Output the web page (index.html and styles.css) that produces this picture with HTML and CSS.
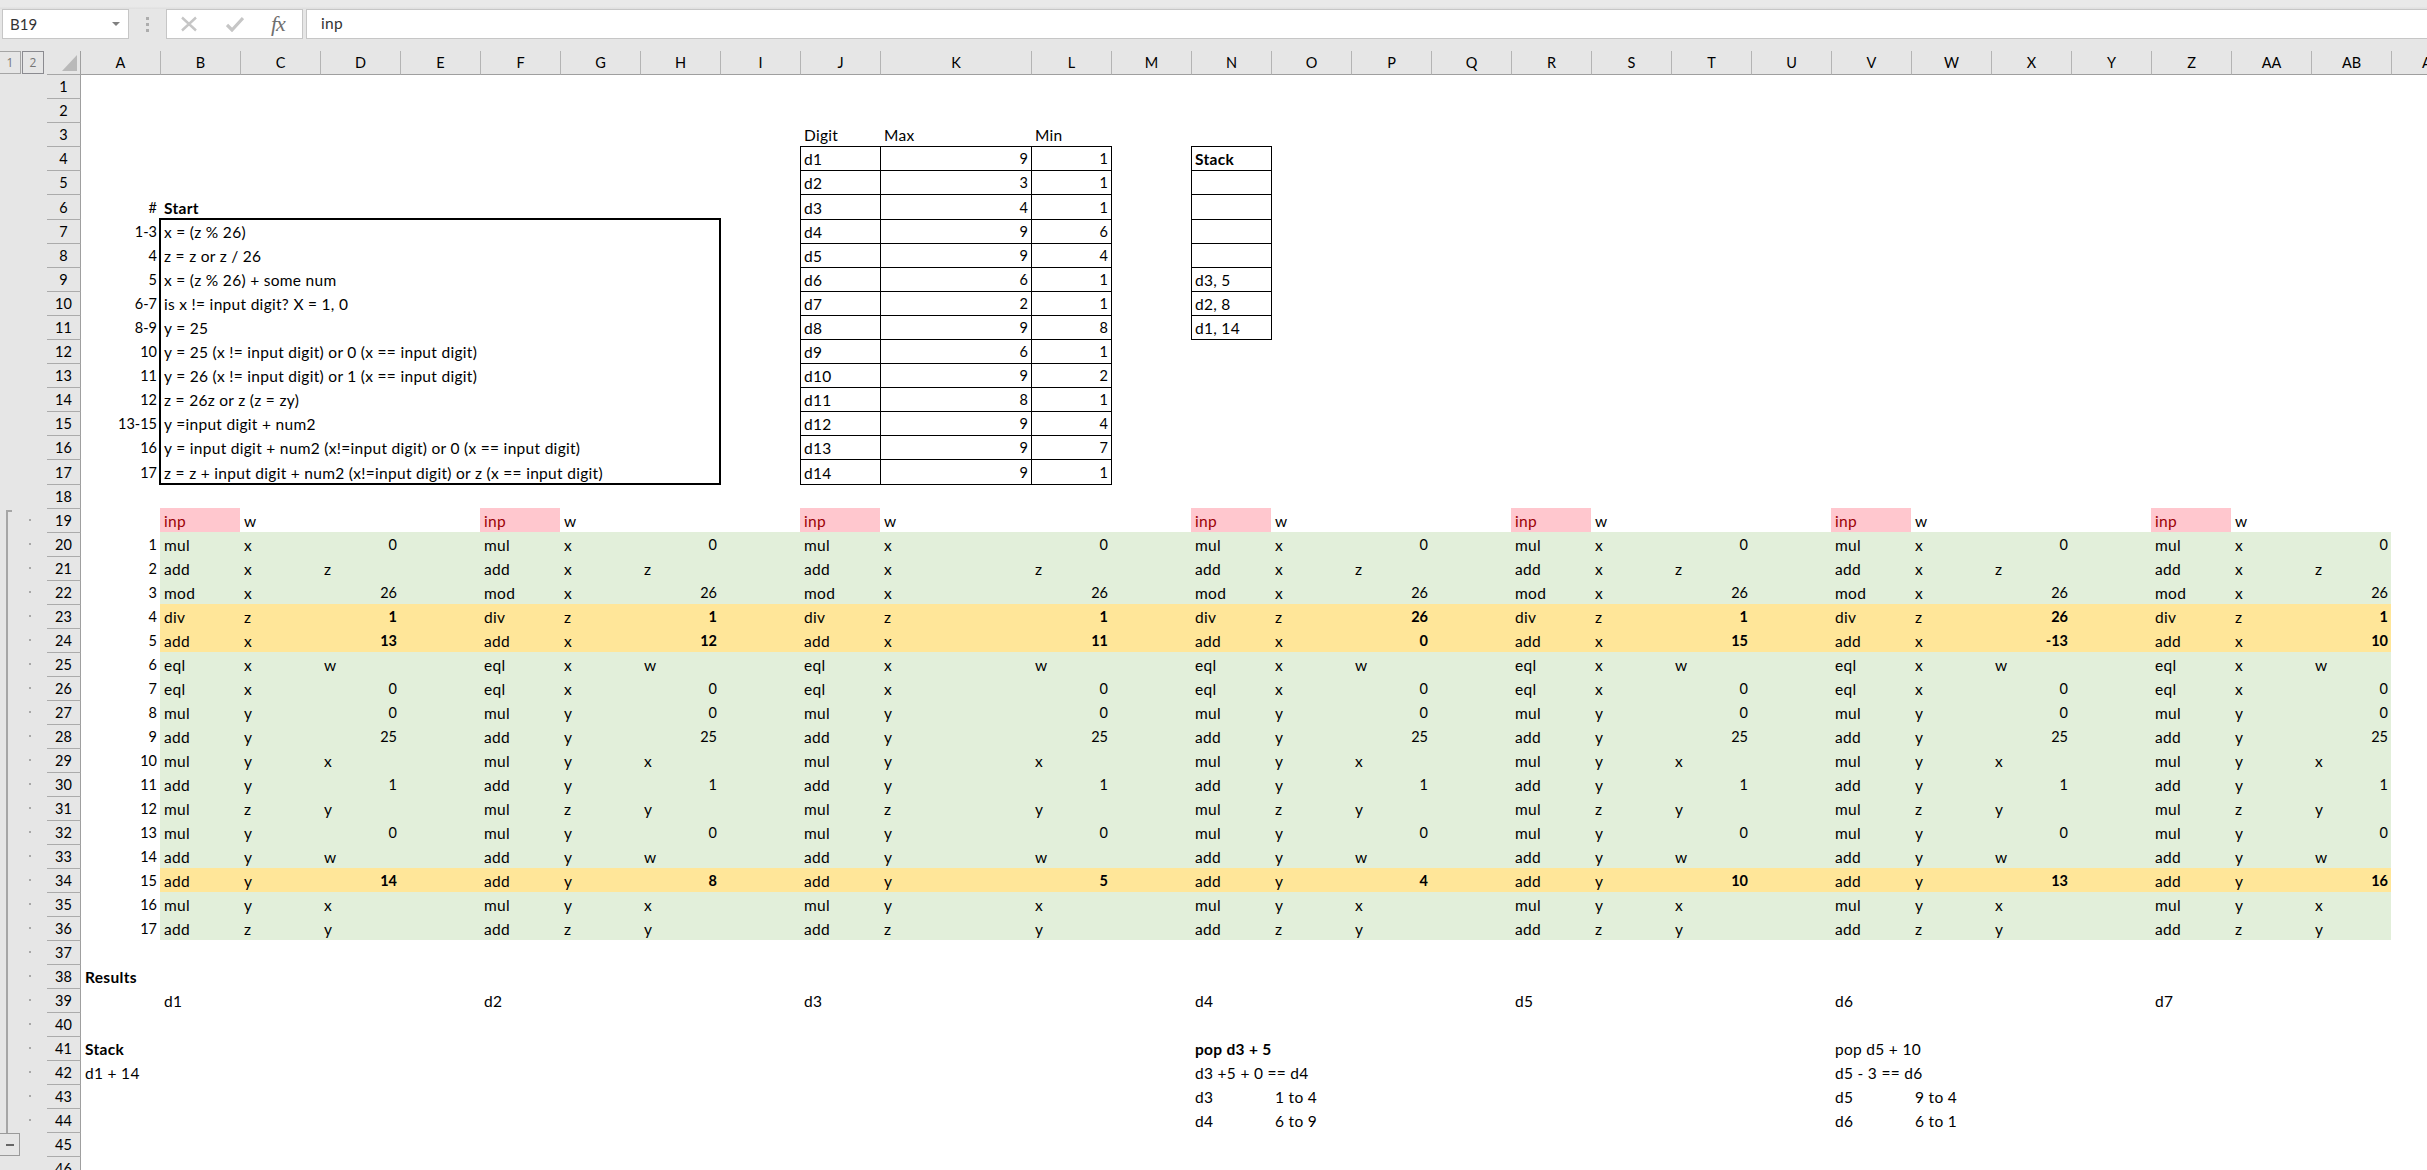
FILE: index.html
```html
<!DOCTYPE html>
<html lang="en">
<head>
<meta charset="utf-8">
<title>Worksheet</title>
<link rel="stylesheet" href="styles.css">
</head>
<body>
<div class="app">
  <div class="top-edge"></div>
  <div class="formula-bar">
    <div class="name-box"><span>B19</span><svg class="caret" width="8" height="4" viewBox="0 0 8 4"><path d="M0 0h8L4 4z" fill="#808080"/></svg></div>
    <div class="grip"><i></i><i></i><i></i></div>
    <div class="fx-box">
      <svg class="fx-icon" width="18" height="16" viewBox="0 0 18 16"><path d="M2 1.5 16 14.5M16 1.5 2 14.5" stroke="#c6c6c6" stroke-width="2.4" fill="none"/></svg>
      <svg class="fx-icon" width="18" height="16" viewBox="0 0 18 16"><path d="M1 9l5 5L17 2" stroke="#c6c6c6" stroke-width="3.2" fill="none"/></svg>
      <span class="fx">fx</span>
    </div>
    <div class="formula-input">inp</div>
  </div>
  <div class="gap"></div>
  <div class="sheet">
    <table class="grid">
      <colgroup>
        <col class="w47"><col class="w34"><col class="w79">
        <col class="c"><col class="c"><col class="c"><col class="c"><col class="c"><col class="c"><col class="c"><col class="c"><col class="c">
        <col class="w151">
        <col class="c"><col class="c"><col class="c"><col class="c"><col class="c"><col class="c"><col class="c"><col class="c"><col class="c"><col class="c"><col class="c"><col class="c"><col class="c"><col class="c"><col class="c"><col class="c"><col class="c"><col class="c">
      </colgroup>
      <thead>
        <tr class="head">
          <th class="ol"><div class="levels"><span class="lvl">1</span><span class="lvl on">2</span></div></th>
          <th class="corner"><svg width="33" height="23" viewBox="0 0 33 23"><path d="M15 20 30 20 30 4z" fill="#b9b9b9"/></svg></th>
          <th class="cl first">A</th><th class="cl">B</th><th class="cl">C</th><th class="cl">D</th><th class="cl">E</th><th class="cl">F</th><th class="cl">G</th><th class="cl">H</th><th class="cl">I</th><th class="cl">J</th><th class="cl">K</th><th class="cl">L</th><th class="cl">M</th><th class="cl">N</th><th class="cl">O</th><th class="cl">P</th><th class="cl">Q</th><th class="cl">R</th><th class="cl">S</th><th class="cl">T</th><th class="cl">U</th><th class="cl">V</th><th class="cl">W</th><th class="cl">X</th><th class="cl">Y</th><th class="cl">Z</th><th class="cl">AA</th><th class="cl">AB</th><th class="cl">AC</th>
        </tr>
      </thead>
      <tbody>
        <tr class="row1"><td class="ol"></td><th class="rh none">1</th></tr>
        <tr><td class="ol"></td><th class="rh">2</th></tr>
        <tr><td class="ol"></td><th class="rh">3</th><td colspan="9"></td><td>Digit</td><td>Max</td><td>Min</td></tr>
        <tr><td class="ol"></td><th class="rh">4</th><td colspan="9"></td><td class="bx">d1</td><td class="bx n">9</td><td class="bx n xr">1</td><td></td><td class="bx xr b">Stack</td></tr>
        <tr><td class="ol"></td><th class="rh">5</th><td colspan="9"></td><td class="bx">d2</td><td class="bx n">3</td><td class="bx n xr">1</td><td></td><td class="bx xr"></td></tr>
        <tr class="tall"><td class="ol"></td><th class="rh">6</th><td class="n">#</td><td class="b" colspan="8">Start</td><td class="bx">d3</td><td class="bx n">4</td><td class="bx n xr">1</td><td></td><td class="bx xr"></td></tr>
        <tr><td class="ol"></td><th class="rh">7</th><td class="n">1-3</td><td colspan="7" class="box bt">x = (z % 26)</td><td></td><td class="bx">d4</td><td class="bx n">9</td><td class="bx n xr">6</td><td></td><td class="bx xr"></td></tr>
        <tr><td class="ol"></td><th class="rh">8</th><td class="n">4</td><td colspan="7" class="box">z = z or z / 26</td><td></td><td class="bx">d5</td><td class="bx n">9</td><td class="bx n xr">4</td><td></td><td class="bx xr"></td></tr>
        <tr><td class="ol"></td><th class="rh">9</th><td class="n">5</td><td colspan="7" class="box">x = (z % 26) + some num</td><td></td><td class="bx">d6</td><td class="bx n">6</td><td class="bx n xr">1</td><td></td><td class="bx xr">d3, 5</td></tr>
        <tr><td class="ol"></td><th class="rh">10</th><td class="n">6-7</td><td colspan="7" class="box">is x != input digit? X = 1, 0</td><td></td><td class="bx">d7</td><td class="bx n">2</td><td class="bx n xr">1</td><td></td><td class="bx xr">d2, 8</td></tr>
        <tr><td class="ol"></td><th class="rh">11</th><td class="n">8-9</td><td colspan="7" class="box">y = 25</td><td></td><td class="bx">d8</td><td class="bx n">9</td><td class="bx n xr">8</td><td></td><td class="bx xr xb">d1, 14</td></tr>
        <tr><td class="ol"></td><th class="rh">12</th><td class="n">10</td><td colspan="7" class="box">y = 25 (x != input digit) or 0 (x == input digit)</td><td></td><td class="bx">d9</td><td class="bx n">6</td><td class="bx n xr">1</td></tr>
        <tr><td class="ol"></td><th class="rh">13</th><td class="n">11</td><td colspan="7" class="box">y = 26 (x != input digit) or 1 (x == input digit)</td><td></td><td class="bx">d10</td><td class="bx n">9</td><td class="bx n xr">2</td></tr>
        <tr><td class="ol"></td><th class="rh">14</th><td class="n">12</td><td colspan="7" class="box">z = 26z or z (z = zy)</td><td></td><td class="bx">d11</td><td class="bx n">8</td><td class="bx n xr">1</td></tr>
        <tr><td class="ol"></td><th class="rh">15</th><td class="n">13-15</td><td colspan="7" class="box">y =input digit + num2</td><td></td><td class="bx">d12</td><td class="bx n">9</td><td class="bx n xr">4</td></tr>
        <tr><td class="ol"></td><th class="rh">16</th><td class="n">16</td><td colspan="7" class="box">y = input digit + num2 (x!=input digit) or 0 (x == input digit)</td><td></td><td class="bx">d13</td><td class="bx n">9</td><td class="bx n xr">7</td></tr>
        <tr class="tall"><td class="ol"></td><th class="rh">17</th><td class="n">17</td><td colspan="7" class="box bb">z = z + input digit + num2 (x!=input digit) or z (x == input digit)</td><td></td><td class="bx xb">d14</td><td class="bx n xb">9</td><td class="bx n xr xb">1</td></tr>
        <tr><td class="ol"></td><th class="rh">18</th></tr>
        <tr><td class="ol d"></td><th class="rh">19</th><td></td><td class="p">inp</td><td>w</td><td></td><td></td><td class="p">inp</td><td>w</td><td></td><td></td><td class="p">inp</td><td>w</td><td></td><td></td><td class="p">inp</td><td>w</td><td></td><td></td><td class="p">inp</td><td>w</td><td></td><td></td><td class="p">inp</td><td>w</td><td></td><td></td><td class="p">inp</td><td>w</td></tr>
        <tr class="g"><td class="ol d"></td><th class="rh">20</th><td class="n">1</td><td>mul</td><td>x</td><td class="n">0</td><td></td><td>mul</td><td>x</td><td class="n">0</td><td></td><td>mul</td><td>x</td><td class="n">0</td><td></td><td>mul</td><td>x</td><td class="n">0</td><td></td><td>mul</td><td>x</td><td class="n">0</td><td></td><td>mul</td><td>x</td><td class="n">0</td><td></td><td>mul</td><td>x</td><td class="n">0</td></tr>
        <tr class="g"><td class="ol d"></td><th class="rh">21</th><td class="n">2</td><td>add</td><td>x</td><td>z</td><td></td><td>add</td><td>x</td><td>z</td><td></td><td>add</td><td>x</td><td>z</td><td></td><td>add</td><td>x</td><td>z</td><td></td><td>add</td><td>x</td><td>z</td><td></td><td>add</td><td>x</td><td>z</td><td></td><td>add</td><td>x</td><td>z</td></tr>
        <tr class="g"><td class="ol d"></td><th class="rh">22</th><td class="n">3</td><td>mod</td><td>x</td><td class="n">26</td><td></td><td>mod</td><td>x</td><td class="n">26</td><td></td><td>mod</td><td>x</td><td class="n">26</td><td></td><td>mod</td><td>x</td><td class="n">26</td><td></td><td>mod</td><td>x</td><td class="n">26</td><td></td><td>mod</td><td>x</td><td class="n">26</td><td></td><td>mod</td><td>x</td><td class="n">26</td></tr>
        <tr class="o"><td class="ol d"></td><th class="rh">23</th><td class="n">4</td><td>div</td><td>z</td><td class="n b">1</td><td></td><td>div</td><td>z</td><td class="n b">1</td><td></td><td>div</td><td>z</td><td class="n b">1</td><td></td><td>div</td><td>z</td><td class="n b">26</td><td></td><td>div</td><td>z</td><td class="n b">1</td><td></td><td>div</td><td>z</td><td class="n b">26</td><td></td><td>div</td><td>z</td><td class="n b">1</td></tr>
        <tr class="o"><td class="ol d"></td><th class="rh">24</th><td class="n">5</td><td>add</td><td>x</td><td class="n b">13</td><td></td><td>add</td><td>x</td><td class="n b">12</td><td></td><td>add</td><td>x</td><td class="n b">11</td><td></td><td>add</td><td>x</td><td class="n b">0</td><td></td><td>add</td><td>x</td><td class="n b">15</td><td></td><td>add</td><td>x</td><td class="n b">-13</td><td></td><td>add</td><td>x</td><td class="n b">10</td></tr>
        <tr class="g"><td class="ol d"></td><th class="rh">25</th><td class="n">6</td><td>eql</td><td>x</td><td>w</td><td></td><td>eql</td><td>x</td><td>w</td><td></td><td>eql</td><td>x</td><td>w</td><td></td><td>eql</td><td>x</td><td>w</td><td></td><td>eql</td><td>x</td><td>w</td><td></td><td>eql</td><td>x</td><td>w</td><td></td><td>eql</td><td>x</td><td>w</td></tr>
        <tr class="g"><td class="ol d"></td><th class="rh">26</th><td class="n">7</td><td>eql</td><td>x</td><td class="n">0</td><td></td><td>eql</td><td>x</td><td class="n">0</td><td></td><td>eql</td><td>x</td><td class="n">0</td><td></td><td>eql</td><td>x</td><td class="n">0</td><td></td><td>eql</td><td>x</td><td class="n">0</td><td></td><td>eql</td><td>x</td><td class="n">0</td><td></td><td>eql</td><td>x</td><td class="n">0</td></tr>
        <tr class="g"><td class="ol d"></td><th class="rh">27</th><td class="n">8</td><td>mul</td><td>y</td><td class="n">0</td><td></td><td>mul</td><td>y</td><td class="n">0</td><td></td><td>mul</td><td>y</td><td class="n">0</td><td></td><td>mul</td><td>y</td><td class="n">0</td><td></td><td>mul</td><td>y</td><td class="n">0</td><td></td><td>mul</td><td>y</td><td class="n">0</td><td></td><td>mul</td><td>y</td><td class="n">0</td></tr>
        <tr class="g"><td class="ol d"></td><th class="rh">28</th><td class="n">9</td><td>add</td><td>y</td><td class="n">25</td><td></td><td>add</td><td>y</td><td class="n">25</td><td></td><td>add</td><td>y</td><td class="n">25</td><td></td><td>add</td><td>y</td><td class="n">25</td><td></td><td>add</td><td>y</td><td class="n">25</td><td></td><td>add</td><td>y</td><td class="n">25</td><td></td><td>add</td><td>y</td><td class="n">25</td></tr>
        <tr class="g"><td class="ol d"></td><th class="rh">29</th><td class="n">10</td><td>mul</td><td>y</td><td>x</td><td></td><td>mul</td><td>y</td><td>x</td><td></td><td>mul</td><td>y</td><td>x</td><td></td><td>mul</td><td>y</td><td>x</td><td></td><td>mul</td><td>y</td><td>x</td><td></td><td>mul</td><td>y</td><td>x</td><td></td><td>mul</td><td>y</td><td>x</td></tr>
        <tr class="g"><td class="ol d"></td><th class="rh">30</th><td class="n">11</td><td>add</td><td>y</td><td class="n">1</td><td></td><td>add</td><td>y</td><td class="n">1</td><td></td><td>add</td><td>y</td><td class="n">1</td><td></td><td>add</td><td>y</td><td class="n">1</td><td></td><td>add</td><td>y</td><td class="n">1</td><td></td><td>add</td><td>y</td><td class="n">1</td><td></td><td>add</td><td>y</td><td class="n">1</td></tr>
        <tr class="g"><td class="ol d"></td><th class="rh">31</th><td class="n">12</td><td>mul</td><td>z</td><td>y</td><td></td><td>mul</td><td>z</td><td>y</td><td></td><td>mul</td><td>z</td><td>y</td><td></td><td>mul</td><td>z</td><td>y</td><td></td><td>mul</td><td>z</td><td>y</td><td></td><td>mul</td><td>z</td><td>y</td><td></td><td>mul</td><td>z</td><td>y</td></tr>
        <tr class="g"><td class="ol d"></td><th class="rh">32</th><td class="n">13</td><td>mul</td><td>y</td><td class="n">0</td><td></td><td>mul</td><td>y</td><td class="n">0</td><td></td><td>mul</td><td>y</td><td class="n">0</td><td></td><td>mul</td><td>y</td><td class="n">0</td><td></td><td>mul</td><td>y</td><td class="n">0</td><td></td><td>mul</td><td>y</td><td class="n">0</td><td></td><td>mul</td><td>y</td><td class="n">0</td></tr>
        <tr class="g"><td class="ol d"></td><th class="rh">33</th><td class="n">14</td><td>add</td><td>y</td><td>w</td><td></td><td>add</td><td>y</td><td>w</td><td></td><td>add</td><td>y</td><td>w</td><td></td><td>add</td><td>y</td><td>w</td><td></td><td>add</td><td>y</td><td>w</td><td></td><td>add</td><td>y</td><td>w</td><td></td><td>add</td><td>y</td><td>w</td></tr>
        <tr class="o"><td class="ol d"></td><th class="rh">34</th><td class="n">15</td><td>add</td><td>y</td><td class="n b">14</td><td></td><td>add</td><td>y</td><td class="n b">8</td><td></td><td>add</td><td>y</td><td class="n b">5</td><td></td><td>add</td><td>y</td><td class="n b">4</td><td></td><td>add</td><td>y</td><td class="n b">10</td><td></td><td>add</td><td>y</td><td class="n b">13</td><td></td><td>add</td><td>y</td><td class="n b">16</td></tr>
        <tr class="g"><td class="ol d"></td><th class="rh">35</th><td class="n">16</td><td>mul</td><td>y</td><td>x</td><td></td><td>mul</td><td>y</td><td>x</td><td></td><td>mul</td><td>y</td><td>x</td><td></td><td>mul</td><td>y</td><td>x</td><td></td><td>mul</td><td>y</td><td>x</td><td></td><td>mul</td><td>y</td><td>x</td><td></td><td>mul</td><td>y</td><td>x</td></tr>
        <tr class="g"><td class="ol d"></td><th class="rh">36</th><td class="n">17</td><td>add</td><td>z</td><td>y</td><td></td><td>add</td><td>z</td><td>y</td><td></td><td>add</td><td>z</td><td>y</td><td></td><td>add</td><td>z</td><td>y</td><td></td><td>add</td><td>z</td><td>y</td><td></td><td>add</td><td>z</td><td>y</td><td></td><td>add</td><td>z</td><td>y</td></tr>
        <tr><td class="ol d"></td><th class="rh">37</th></tr>
        <tr><td class="ol d"></td><th class="rh">38</th><td class="b">Results</td></tr>
        <tr><td class="ol d"></td><th class="rh">39</th><td></td><td colspan="4">d1</td><td colspan="4">d2</td><td colspan="4">d3</td><td colspan="4">d4</td><td colspan="4">d5</td><td colspan="4">d6</td><td colspan="3">d7</td></tr>
        <tr><td class="ol d"></td><th class="rh">40</th></tr>
        <tr><td class="ol d"></td><th class="rh">41</th><td class="b">Stack</td><td colspan="12"></td><td class="b" colspan="8">pop d3 + 5</td><td colspan="8" class="v">pop d5 + 10</td></tr>
        <tr><td class="ol d"></td><th class="rh">42</th><td>d1 + 14</td><td colspan="12"></td><td colspan="8">d3 +5 + 0 == d4</td><td colspan="8" class="v">d5 - 3 == d6</td></tr>
        <tr><td class="ol d"></td><th class="rh">43</th><td colspan="13"></td><td>d3</td><td colspan="7">1 to 4</td><td>d5</td><td colspan="7">9 to 4</td></tr>
        <tr><td class="ol d"></td><th class="rh">44</th><td colspan="13"></td><td>d4</td><td colspan="7">6 to 9</td><td>d6</td><td colspan="7">6 to 1</td></tr>
        <tr><td class="ol"></td><th class="rh">45</th></tr>
        <tr><td class="ol"></td><th class="rh">46</th></tr>
      </tbody>
    </table>
    <div class="bracket"></div>
    <div class="collapse"></div>
  </div>
</div>
</body>
</html>
```

FILE: styles.css
```css
html, body {
  margin: 0;
  height: 100%;
  overflow: hidden;
  background: #fff;
}
.app {
  width: 2427px;
  height: 1170px;
  overflow: hidden;
  display: flex;
  flex-direction: column;
  font-family: Lato, "Noto Sans", sans-serif;
  font-size: 14.5px;
  color: #000;
}
.top-edge {
  height: 9px;
  flex: none;
  background: linear-gradient(#e9e9e9, #e9e9e9 70%, #dedede);
}
.formula-bar {
  height: 30px;
  flex: none;
  display: flex;
  background: #e6e6e6;
  box-sizing: border-box;
  padding-left: 2px;
}
.name-box {
  width: 127px;
  box-sizing: border-box;
  border: 1px solid #c6c6c6;
  background: #fff;
  display: flex;
  align-items: center;
  justify-content: space-between;
  padding: 0 8px 0 7px;
  font-size: 15px;
  color: #333;
}
.grip {
  width: 37px;
  display: flex;
  flex-direction: column;
  align-items: center;
  justify-content: center;
  gap: 3px;
}
.grip i {
  display: block;
  width: 3px;
  height: 3px;
  background: #adadad;
}
.fx-box {
  width: 137px;
  box-sizing: border-box;
  border: 1px solid #c6c6c6;
  background: #fff;
  display: flex;
  align-items: center;
  padding-left: 13px;
  gap: 28px;
}
.fx {
  font-family: "Liberation Serif", serif;
  font-style: italic;
  font-size: 22px;
  color: #707070;
  letter-spacing: -1px;
  margin-left: -1px;
}
.formula-input {
  flex: 1;
  margin-left: 3px;
  box-sizing: border-box;
  border: 1px solid #c6c6c6;
  border-right: 0;
  background: #fff;
  padding-left: 14px;
  line-height: 27px;
  font-size: 15.5px;
  letter-spacing: .3px;
  color: #333;
}
.gap {
  height: 12px;
  flex: none;
  background: #e6e6e6;
}
.sheet {
  position: relative;
  flex: 1;
  overflow: hidden;
  background: #fff;
}
.grid {
  table-layout: fixed;
  width: 2471px;
  border-collapse: separate;
  border-spacing: 0;
}
.w47 { width: 47px; }
.w34 { width: 34px; }
.w79 { width: 79px; }
.c { width: 80px; }
.w151 { width: 151px; }

.grid td, .grid th {
  padding: 0 3px 3px 4px;
  height: 24px;
  box-sizing: border-box;
  line-height: 16px;
  vertical-align: bottom;
  white-space: nowrap;
  overflow: hidden;
  text-align: left;
  font-weight: 400;
}
.grid td {
  font-size: 15.5px;
  letter-spacing: .3px;
}
.grid tr.tall td, .grid tr.tall th { height: 25px; }
.grid tr.row1 td, .grid tr.row1 th { height: 23px; }

.grid .ol {
  background-color: #e6e6e6;
  padding: 0;
}
.grid .d {
  background-image: linear-gradient(#a8a8a8, #a8a8a8);
  background-repeat: no-repeat;
  background-size: 2px 2px;
  background-position: 29px 50%;
}
.levels {
  display: flex;
  gap: 1px;
  height: 23px;
  margin-bottom: -3px;
}
.lvl {
  width: 21px;
  box-sizing: border-box;
  border: 1px solid #a5a5a5;
  border-left: 0;
  font-size: 12px;
  line-height: 21px;
  text-align: center;
  color: #767676;
  font-family: "Open Sans", sans-serif;
}
.lvl.on {
  border: 1px solid #8b8b90;
  width: 22px;
}
.grid .head th {
  height: 24px;
  background: #e6e6e6;
  vertical-align: middle;
}
.grid .corner {
  padding: 0;
  border-bottom: 1px solid #a6a6a6;
  border-right: 1px solid #9f9f9f;
  font-size: 0;
  line-height: 0;
}
.grid .cl {
  padding: 0;
  text-align: center;
  border-left: 1px solid #b4b4b4;
  border-bottom: 1px solid #9f9f9f;
}
.grid .cl.first { border-left: 0; }
.grid .head .ol {
  padding: 0;
  vertical-align: top;
}
.grid .rh {
  background: #e6e6e6;
  border-top: 1px solid #ababab;
  border-right: 1px solid #9f9f9f;
  text-align: center;
  padding: 0 0 3px;
}
.grid .rh.none { border-top: 0; }

.grid .n {
  text-align: right;
  font-size: 14.5px;
  letter-spacing: 0;
}
.grid .b { font-weight: 700; }
.grid .p {
  background: #ffc7ce;
  color: #9c0006;
}
.grid tr.g td:nth-child(n+4) { background: #e2efda; }
.grid tr.o td:nth-child(n+4) { background: #ffe699; }

.grid .bx {
  border-top: 1px solid #000;
  border-left: 1px solid #000;
  padding-left: 3px;
  overflow: visible;
}
.grid .xr { box-shadow: 1px 0 0 #000; }
.grid .xb { box-shadow: 0 1px 0 #000; }
.grid .xr.xb { box-shadow: 1px 0 0 #000, 0 1px 0 #000, 1px 1px 0 #000; }

.grid .box {
  box-shadow: -1px 0 0 #000, inset 1px 0 0 #000, 1px 0 0 #000, inset -1px 0 0 #000;
  overflow: visible;
}
.grid .box.bt {
  box-shadow: -1px 0 0 #000, inset 1px 0 0 #000, 1px 0 0 #000, inset -1px 0 0 #000, 0 -1px 0 #000, inset 0 1px 0 #000, -1px -1px 0 #000, 1px -1px 0 #000;
}
.grid .box.bb {
  box-shadow: -1px 0 0 #000, inset 1px 0 0 #000, 1px 0 0 #000, inset -1px 0 0 #000, 0 1px 0 #000, inset 0 -1px 0 #000, -1px 1px 0 #000, 1px 1px 0 #000;
}

.bracket {
  position: absolute;
  left: 6px;
  top: 459px;
  width: 6px;
  height: 623px;
  box-sizing: border-box;
  border-left: 2px solid #a6a6a6;
  border-top: 2px solid #a6a6a6;
}
.collapse {
  position: absolute;
  left: -1px;
  top: 1082px;
  width: 21px;
  height: 23px;
  box-sizing: border-box;
  border: 1px solid #9a9a9a;
  background: linear-gradient(#666, #666) center / 8px 2px no-repeat;
}
```
